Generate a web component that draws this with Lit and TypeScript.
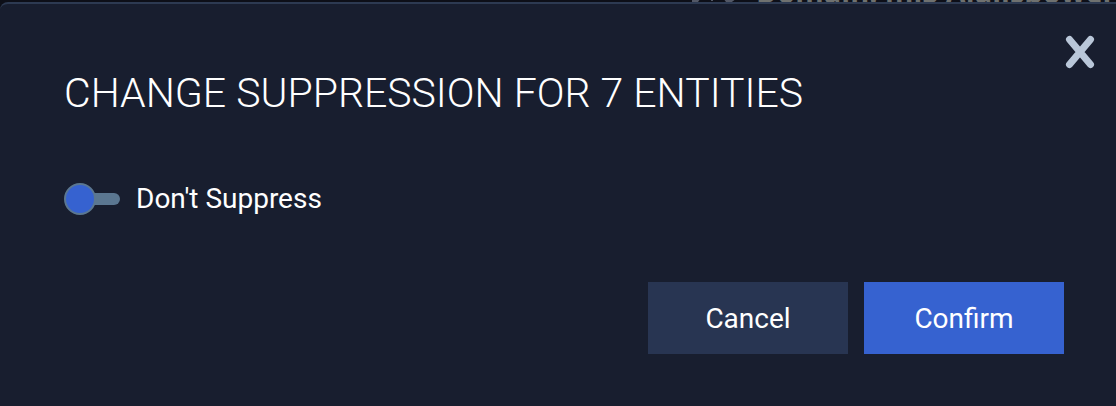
import { LitElement, html, css } from "lit";
import { customElement, state } from "lit/decorators.js";

@customElement("app-root")
export class AppRoot extends LitElement {
  @state() private suppress = false;

  static styles = css`
    :host {
      display: block;
      box-sizing: border-box;
      min-height: 100vh;
      background: #0d0f18;
      color: #ffffff;
      font-family: Roboto, "Liberation Sans", sans-serif;
    }
    *,
    *::before,
    *::after {
      box-sizing: border-box;
    }
    .page {
      display: flex;
      flex-direction: column;
      min-height: 100vh;
    }
    .backdrop {
      display: flex;
      align-items: flex-end;
      gap: 20px;
      height: 2px;
      padding-left: 62%;
      overflow: hidden;
      color: #6f716f;
      font: 700 29px/20px "Open Sans", sans-serif;
      white-space: nowrap;
    }
    .backdrop svg {
      flex: none;
    }
    .dialog {
      flex: 1;
      display: flex;
      flex-direction: column;
      position: relative;
      padding: 64px 52px 52px 64px;
      background: #181e2f;
      border-top: 2px solid #2d3a52;
      border-radius: 8px 0 0 0;
    }
    .close {
      position: absolute;
      top: 28px;
      right: 16px;
      display: flex;
      padding: 2px 4px;
      border: 0;
      background: none;
      cursor: pointer;
    }
    h1 {
      margin: 0;
      font-size: 41px;
      line-height: 50px;
      font-weight: 300;
    }
    .toggle {
      display: flex;
      align-items: center;
      align-self: flex-start;
      gap: 16px;
      margin-top: 63px;
      font-size: 28px;
      line-height: 36px;
      cursor: pointer;
    }
    .switch {
      appearance: none;
      display: flex;
      align-items: center;
      width: 56px;
      height: 32px;
      margin: 0;
      cursor: pointer;
    }
    .switch::before {
      content: "";
      flex: none;
      width: 32px;
      height: 32px;
      border: 2px solid #5b7791;
      border-radius: 50%;
      background: #3662d0;
    }
    .switch::after {
      content: "";
      flex: 1;
      height: 12px;
      margin-left: -2px;
      border-radius: 0 6px 6px 0;
      background: #5b7791;
    }
    .switch:checked {
      transform: scaleX(-1);
    }
    .actions {
      display: flex;
      justify-content: flex-end;
      gap: 16px;
      margin-top: auto;
    }
    .button {
      width: 200px;
      height: 72px;
      padding: 0;
      border: 0;
      background: #283552;
      color: inherit;
      font: inherit;
      font-size: 28px;
      cursor: pointer;
    }
    .primary {
      background: #3662d0;
    }
  `;

  render() {
    return html`
      <div class="page">
        <div class="backdrop" aria-hidden="true">
          <svg width="44" height="24" viewBox="0 0 44 24" fill="none" stroke="#535866">
            <path stroke-width="7" d="M-2 18 6 24M42 18 34 24" />
            <path stroke-width="2" d="M20 20v3" />
          </svg>
          <span>Domain: mjS Ajailspower</span>
        </div>
        <section class="dialog" role="dialog" aria-labelledby="title">
          <button class="close" aria-label="Close">
            <svg width="32" height="36" viewBox="0 0 32 36" fill="none" stroke="#b9c7d9" stroke-width="7" stroke-linecap="round">
              <path d="M5.5 5.5 26.5 30.5M26.5 5.5 5.5 30.5" />
            </svg>
          </button>
          <h1 id="title">CHANGE SUPPRESSION FOR 7 ENTITIES</h1>
          <label class="toggle">
            <input
              class="switch"
              type="checkbox"
              role="switch"
              .checked=${this.suppress}
              @change=${(e: Event) => (this.suppress = (e.target as HTMLInputElement).checked)}
            />
            <span>${this.suppress ? "Suppress" : "Don't Suppress"}</span>
          </label>
          <div class="actions">
            <button class="button">Cancel</button>
            <button class="button primary">Confirm</button>
          </div>
        </section>
      </div>
    `;
  }
}
